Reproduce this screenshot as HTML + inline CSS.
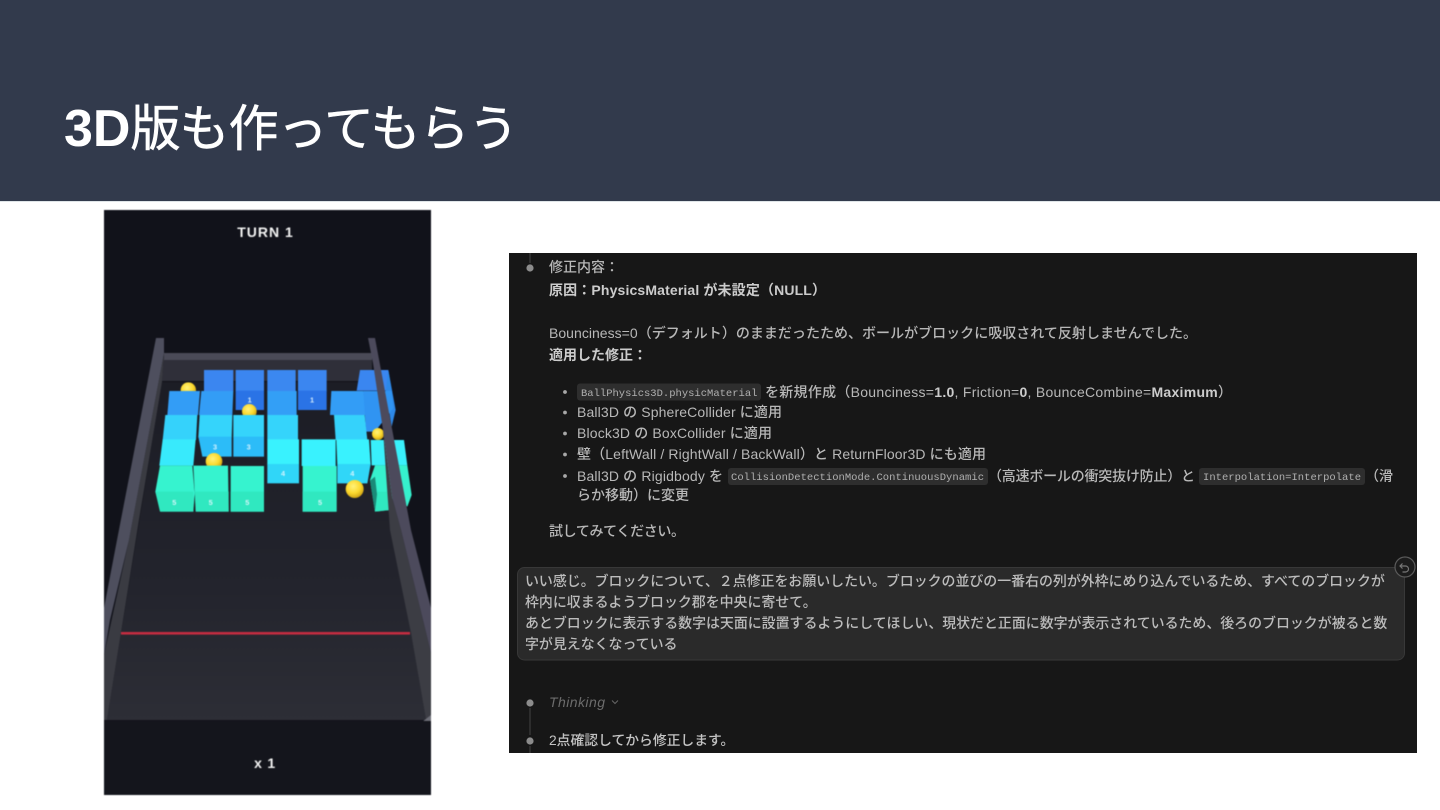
<!DOCTYPE html>
<html lang="ja"><head><meta charset="utf-8"><title>3D版も作ってもらう</title>
<style>
html,body{margin:0;padding:0;background:#fff;width:1440px;height:810px;overflow:hidden}
svg{display:block}
.j{font-family:"Liberation Sans","Noto Sans CJK JP",sans-serif}
.t{font-size:14px;fill:#b8b8b8;font-weight:500}
.u{font-size:13.93px;fill:#bcbcbc;font-weight:500}
.b{font-weight:700;fill:#cccccc}
.m{font-family:"Liberation Mono",monospace;font-size:10.5px;fill:#b0b0b0}
.n{font-family:"Liberation Sans",sans-serif;font-size:22px;font-weight:700;fill:#e4f7ff;text-anchor:middle;opacity:.9}
</style></head><body>
<svg width="1440" height="810" viewBox="0 0 1440 810" xmlns="http://www.w3.org/2000/svg">
<defs>
<linearGradient id="fl" x1="0" y1="0" x2="0" y2="1"><stop offset="0" stop-color="#1c1d25"/><stop offset=".6" stop-color="#23242d"/><stop offset="1" stop-color="#2d2e36"/></linearGradient>
<radialGradient id="ball" cx=".42" cy=".35" r=".7"><stop offset="0" stop-color="#fff27a"/><stop offset=".55" stop-color="#fcd92e"/><stop offset="1" stop-color="#c79a10"/></radialGradient>
<filter id="bl" x="-5%" y="-5%" width="110%" height="110%" color-interpolation-filters="sRGB"><feGaussianBlur stdDeviation=".45"/></filter>
<filter id="tb" x="-2%" y="-5%" width="104%" height="110%" color-interpolation-filters="sRGB"><feGaussianBlur stdDeviation=".28"/></filter>
</defs>
<rect width="1440" height="810" fill="#fff"/>
<rect width="1440" height="201" fill="#323a4c"/>
<rect y="201" width="1440" height="1" fill="#dfe5e8"/>
<text class="j" x="64" y="146" fill="#fff" style="font-size:50px"><tspan style="font-size:52px;font-weight:700">3D</tspan><tspan style="font-weight:400;letter-spacing:-1px;stroke:#fff;stroke-width:.5px">版も作ってもらう</tspan></text>

<g filter="url(#bl)">
<rect x="104" y="210" width="327" height="585" fill="#11121a"/>
<polygon points="162,382 368,382 426,720 107,720" fill="url(#fl)"/>
<!-- back wall -->
<polygon points="164,353 372,353 372,381 162,381" fill="#2f2f39"/>
<polygon points="164,353 372,353 372,360 164,360" fill="#4a4a57"/>
<!-- left wall -->
<polygon points="164,353 162,382 139,520 121,633 107,720 104,720 104,655 129,540" fill="#3a3b42"/>
<polygon points="156,338 164,338 164,353 129,540 110,620 104,655 104,608 117,540" fill="#4e4f5e"/>
<g transform="translate(104 320) scale(.33333)">
<!-- row 1 -->
<circle cx="253" cy="210" r="23" fill="url(#ball)"/>
<rect x="300" y="150" width="88" height="64" fill="#3b86f0"/>
<rect x="395" y="150" width="85" height="64" fill="#3b86f0"/><rect x="395" y="212" width="85" height="58" fill="#2a73e6"/>
<rect x="490" y="150" width="85" height="64" fill="#3b88f0"/>
<rect x="582" y="150" width="86" height="64" fill="#3b86f0"/><rect x="582" y="212" width="86" height="58" fill="#2a73e6"/>
<polygon points="768,150 853,150 863,212 758,212" fill="#3a86f0"/>
<polygon points="853,150 875,270 863,320 845,212" fill="#2d88e8"/>
<text class="n" x="437" y="248">1</text><text class="n" x="624" y="248">1</text>
<!-- row 2 -->
<polygon points="196,213 288,213 282,285 190,285" fill="#339df6"/>
<polygon points="292,213 388,213 385,285 285,285" fill="#339df6"/>
<rect x="490" y="213" width="88" height="72" fill="#339ff6"/>
<polygon points="682,213 778,213 788,285 678,285" fill="#339df6"/>
<polygon points="778,213 863,213 868,265 840,300 813,335 786,335" fill="#3094f2"/>
<circle cx="436" cy="274" r="22" fill="url(#ball)"/>
<circle cx="822" cy="342" r="18" fill="url(#ball)"/>
<!-- row 3 -->
<polygon points="184,285 280,285 276,360 176,360" fill="#35d2fb"/>
<polygon points="287,285 385,285 383,352 283,352" fill="#35d4fb"/><polygon points="283,350 383,350 383,410 295,410" fill="#2cbcf8"/>
<rect x="388" y="285" width="92" height="67" fill="#35d4fb"/><rect x="388" y="350" width="92" height="60" fill="#2cbcf8"/>
<rect x="490" y="285" width="92" height="74" fill="#35d4fb"/>
<polygon points="690,285 782,285 790,360 695,360" fill="#35d2fb"/>
<text class="n" x="333" y="389">3</text><text class="n" x="434" y="389">3</text>
<!-- row 4 -->
<polygon points="176,358 275,358 268,437 166,437" fill="#38eafc"/>
<circle cx="330" cy="424" r="25" fill="url(#ball)"/>
<rect x="490" y="358" width="95" height="76" fill="#39f2fe"/><rect x="490" y="432" width="95" height="58" fill="#30d6f8"/>
<rect x="593" y="358" width="102" height="80" fill="#39f2fe"/>
<polygon points="697,358 795,358 800,434 700,434" fill="#39f2fe"/><polygon points="700,432 800,432 790,490 700,490" fill="#30d6f8"/>
<polygon points="800,360 900,360 910,436 803,436" fill="#39f0fb"/>
<text class="n" x="537" y="468">4</text><text class="n" x="745" y="468">4</text>
<!-- row 5 -->
<polygon points="168,437 265,437 272,520 268,575 170,575 154,515" fill="#36f3cf"/>
<polygon points="154,515 268,515 268,575 168,575" fill="#30e8c0"/>
<polygon points="268,437 372,437 374,575 275,575" fill="#36f3cf"/>
<polygon points="272,515 374,515 374,575 276,575" fill="#30e8c0"/>
<rect x="380" y="438" width="100" height="137" fill="#36f3cf"/><rect x="380" y="515" width="100" height="60" fill="#30e8c0"/>
<rect x="596" y="438" width="102" height="137" fill="#36f3cf"/><rect x="596" y="515" width="100" height="60" fill="#30e8c0"/>
<polygon points="813,436 910,436 923,525 910,560 868,520 858,570 813,575 798,480" fill="#36f1cd"/>
<polygon points="813,470 798,482 813,575 820,530" fill="#1a8a78"/>
<polygon points="820,515 872,515 858,570 813,575" fill="#30e8c0"/>
<text class="n" x="211" y="555">5</text><text class="n" x="320" y="555">5</text><text class="n" x="430" y="555">5</text><text class="n" x="648" y="555">5</text>
<circle cx="752" cy="507" r="27" fill="url(#ball)"/>
</g>
<!-- right wall -->
<polygon points="383,430 390,530 411,633 426,720 431,720 431,653 401,530 392,497" fill="#3c3d44"/>
<polygon points="368,338 375,338 411,530 431,608 431,653 401,530 392,497 383,430 373,363" fill="#4c4a5c"/>
<polygon points="431,715 431,722 422,722" fill="#6c6d76"/>
<rect x="121" y="632" width="289" height="2.6" fill="#c42c40"/>
<rect x="104" y="721" width="327" height="74" fill="#14151c"/>
<text x="265.500" y="237" text-anchor="middle" font-family="Liberation Sans,sans-serif" font-size="14" font-weight="700" letter-spacing="1" fill="#f2f2f2">TURN 1</text>
<text x="265" y="768" text-anchor="middle" font-family="Liberation Sans,sans-serif" font-size="14" font-weight="700" letter-spacing=".8" fill="#f2f2f2">x 1</text>
</g>

<g filter="url(#tb)">
<rect x="509" y="253" width="908" height="500" fill="#171717"/>
<g stroke="#3c3c3c" stroke-width="1.2"><path d="M530 253V263M530 708V735M530 746V753"/></g>
<g fill="#8c8c8c"><circle cx="530" cy="268" r="3.6"/><circle cx="530" cy="703" r="3.6"/><circle cx="530" cy="741" r="3.6"/></g>
<g class="j">
<text class="t" x="549" y="272">修正内容：</text>
<text class="t b" x="549" y="295" textLength="277">原因：PhysicsMaterial が未設定（NULL）</text>
<text class="t" x="549" y="338" textLength="648">Bounciness=0（デフォルト）のままだったため、ボールがブロックに吸収されて反射しませんでした。</text>
<text class="t b" x="549" y="360">適用した修正：</text>
<g fill="#a8a8a8"><circle cx="565" cy="392" r="1.9"/><circle cx="565" cy="412.500" r="1.9"/><circle cx="565" cy="433.500" r="1.9"/><circle cx="565" cy="454.500" r="1.9"/><circle cx="565" cy="476" r="1.9"/></g>
<rect x="577" y="383.500" width="184" height="17" rx="3" fill="#2e2e2e"/>
<text class="m" x="581" y="396">BallPhysics3D.physicMaterial</text>
<text class="t" x="765" y="397" textLength="467">を新規作成（Bounciness=<tspan class="b">1.0</tspan>, Friction=<tspan class="b">0</tspan>, BounceCombine=<tspan class="b">Maximum</tspan>）</text>
<text class="t" x="577" y="417" textLength="205">Ball3D の SphereCollider に適用</text>
<text class="t" x="577" y="438" textLength="195">Block3D の BoxCollider に適用</text>
<text class="t" x="577" y="459" textLength="409">壁（LeftWall / RightWall / BackWall）と ReturnFloor3D にも適用</text>
<text class="t" x="577" y="481" textLength="146">Ball3D の Rigidbody を</text>
<rect x="728" y="468" width="260" height="17" rx="3" fill="#2e2e2e"/>
<text class="m" x="731" y="480" textLength="253">CollisionDetectionMode.ContinuousDynamic</text>
<text class="t" x="988" y="481" textLength="207">（高速ボールの衝突抜け防止）と</text>
<rect x="1199" y="468" width="166" height="17" rx="3" fill="#2e2e2e"/>
<text class="m" x="1203" y="480" textLength="158">Interpolation=Interpolate</text>
<text class="t" x="1365" y="481">（滑</text>
<text class="t" x="577" y="500">らか移動）に変更</text>
<text class="t" x="549" y="536" textLength="136">試してみてください。</text>
<rect x="517.500" y="567.500" width="887" height="92.500" rx="7" fill="#2a2a2a" stroke="#383838"/>
<text class="u" x="525" y="586">いい感じ。ブロックについて、２点修正をお願いしたい。ブロックの並びの一番右の列が外枠にめり込んでいるため、すべてのブロックが</text>
<text class="u" x="525" y="607">枠内に収まるようブロック郡を中央に寄せて。</text>
<text class="u" x="525" y="628">あとブロックに表示する数字は天面に設置するようにしてほしい、現状だと正面に数字が表示されているため、後ろのブロックが被ると数</text>
<text class="u" x="525" y="649">字が見えなくなっている</text>
<text class="t" x="549" y="707" style="fill:#6c6c6c;font-style:italic;font-weight:400" textLength="56">Thinking</text>
<path d="M612 700.500l3 3 3-3" fill="none" stroke="#666" stroke-width="1"/>
<text class="t" x="549" y="745" style="fill:#c4c4c4;font-size:13.8px">2点確認してから修正します。</text>
</g>
<circle cx="1405" cy="567" r="10" fill="#1c1c1c" stroke="#5a5a5a" stroke-width="1.2"/>
<path d="M1402.500 563.500l-2.500 2.500 2.500 2.500M1400.500 566h5a2.800 2.800 0 0 1 0 6h-3" fill="none" stroke="#777" stroke-width="1.200"/>
</g>
</svg>
</body></html>
